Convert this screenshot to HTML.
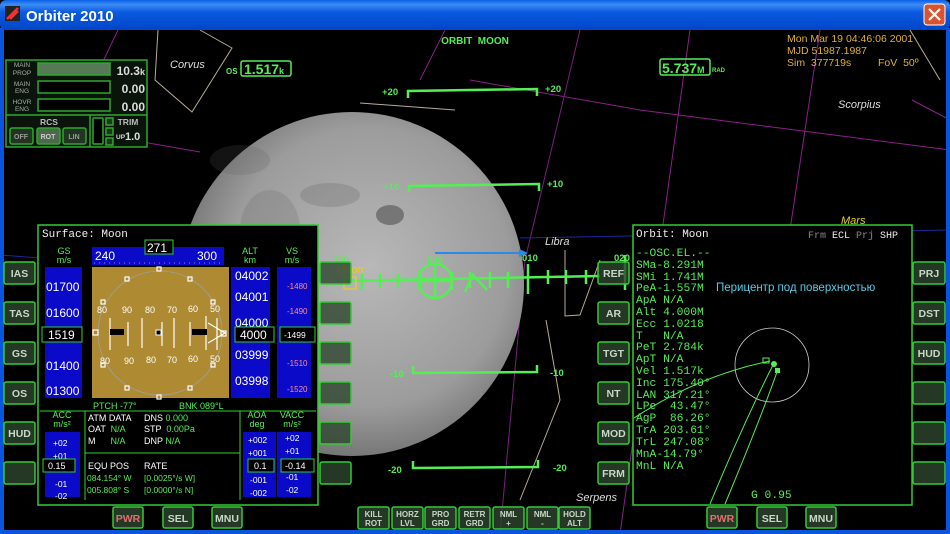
<!DOCTYPE html>
<html><head><meta charset="utf-8"><style>
html,body{margin:0;padding:0;background:#000;width:950px;height:534px;overflow:hidden}
svg{display:block}
text{white-space:pre}
.b{font-family:"Liberation Sans",sans-serif;font-weight:bold}
.m{font-family:"Liberation Mono",monospace}
.s{font-family:"Liberation Sans",sans-serif}
</style></head><body>
<svg width="950" height="534" viewBox="0 0 950 534" xmlns="http://www.w3.org/2000/svg">
<defs>
<linearGradient id="tb" x1="0" y1="0" x2="0" y2="1">
<stop offset="0" stop-color="#0a5fe8"/><stop offset="0.15" stop-color="#3d8cf5"/><stop offset="0.4" stop-color="#0a5ae0"/><stop offset="1" stop-color="#0046c8"/></linearGradient>
<radialGradient id="moon" cx="0.55" cy="0.45" r="0.58">
<stop offset="0" stop-color="#b8b8b8"/><stop offset="0.7" stop-color="#9c9c9c"/><stop offset="1" stop-color="#707070"/></radialGradient>
</defs>
<rect width="950" height="534" fill="#000"/>
<g fill="none" stroke-width="1">
<path d="M5 118 L200 152" stroke="#8a1f8a"/>
<path d="M118 30 L75 120" stroke="#8a1f8a"/>
<path d="M445 30 L420 80" stroke="#8a1f8a"/>
<path d="M470 80 L640 110 L950 150" stroke="#8a1f8a"/>
<path d="M580 30 L525 260 L500 534" stroke="#7a1f7a"/>
<path d="M690 30 L620 534" stroke="#8a1f8a"/>
<path d="M820 30 L790 230" stroke="#8a1f8a"/>
<path d="M912 100 L950 120" stroke="#8a1f8a"/>
<path d="M520 238 L950 230" stroke="#1a2a9a"/>
<path d="M0 255 L40 258" stroke="#1a2a9a"/>
<path d="M158 30 L155 80 L192 112 L232 48 L200 30" stroke="#b8aa98"/>
<path d="M360 103 L455 110" stroke="#b8aa98"/>
<path d="M565 250 L565 316 L580 315 L600 260" stroke="#b8aa98"/>
<path d="M546 320 L560 400 L520 500" stroke="#b8aa98"/>
<path d="M910 30 L940 80" stroke="#b8aa98"/>
</g>
<circle cx="352" cy="284" r="172" fill="url(#moon)"/>
<g fill="#5e5e5e">
<ellipse cx="390" cy="215" rx="14" ry="10" opacity="0.7"/>
<ellipse cx="330" cy="195" rx="30" ry="12" opacity="0.25"/>
<ellipse cx="270" cy="230" rx="30" ry="40" opacity="0.2"/>
<ellipse cx="240" cy="160" rx="30" ry="15" opacity="0.2"/>
</g>
<rect x="0" y="0" width="950" height="30" rx="6" fill="url(#tb)"/>
<rect x="0" y="28" width="4" height="506" fill="#0a55e0"/>
<rect x="946" y="28" width="4" height="506" fill="#0a55e0"/>
<rect x="0" y="530" width="950" height="4" fill="#0a55e0"/>
<rect x="5" y="6" width="15" height="15" fill="#222"/><path d="M7 19 L18 8 M10 19 L18 11" stroke="#e33" stroke-width="2.5"/>
<text x="26" y="21" class="b" font-size="15" fill="#fff">Orbiter 2010</text>
<rect x="924" y="4" width="21" height="21" rx="3" fill="#d8532f" stroke="#fff" stroke-width="1"/>
<path d="M929 9 L940 20 M940 9 L929 20" stroke="#fff" stroke-width="2.2"/>
<g class="s" font-style="italic" font-size="11" fill="#ddd">
<text x="170" y="68">Corvus</text><text x="838" y="108">Scorpius</text><text x="545" y="245">Libra</text><text x="576" y="501">Serpens</text>
<text x="841" y="224" fill="#e8d020">Mars</text><text x="336" y="273" fill="#e8d020">Moon</text>
</g>
<text x="475" y="44" class="b" font-size="10" fill="#55ee55" text-anchor="middle">ORBIT  MOON</text>
<text x="226" y="74" class="b" font-size="8" fill="#55ee55">OS</text>
<rect x="241" y="61" width="50" height="15" rx="2" fill="none" stroke="#55ee55" stroke-width="1.5"/>
<text x="244" y="74" class="b" font-size="14" fill="#55ee55">1.517<tspan font-size="9">k</tspan></text>
<rect x="660" y="59" width="50" height="16" rx="2" fill="none" stroke="#55ee55" stroke-width="1.5"/>
<text x="662" y="73" class="b" font-size="14" fill="#55ee55">5.737<tspan font-size="9">M</tspan></text>
<text x="712" y="72" class="b" font-size="6" fill="#55ee55">RAD</text>
<g class="s" font-size="10.5" fill="#e0b030">
<text x="787" y="42">Mon Mar 19 04:46:06 2001</text><text x="787" y="54">MJD 51987.1987</text><text x="787" y="66">Sim  377719s</text><text x="878" y="66">FoV  50º</text>
</g>
<g stroke="#55ee55" stroke-width="2.5" fill="none">
<path d="M408 98 V91 L537 89 V96"/><path d="M409 192 V186 L539 184 V191"/>
<path d="M413 366 V373 L537 372 V365"/><path d="M413 461 V468 L538 467 V460"/>
</g>
<g class="b" font-size="9.5" fill="#55ee55">
<text x="382" y="95">+20</text><text x="545" y="92">+20</text><text x="383" y="190">+10</text><text x="547" y="187">+10</text>
<text x="390" y="377">-10</text><text x="550" y="376">-10</text><text x="388" y="473">-20</text><text x="553" y="471">-20</text>
<text x="427" y="263">000</text><text x="522" y="261">010</text><text x="614" y="261">020</text><text x="333" y="263">350</text>
</g>
<g stroke="#55ee55" stroke-width="2.5" fill="none">
<path d="M340 281 L600 276"/>
<path d="M362 274 V290 M380 274 V288 M398 274 V288 M420 272 V290 M452 272 V290 M470 272 V288 M490 272 V288 M508 272 V288 M528 264 V294 M548 270 V284 M566 270 V284 M586 270 V284"/>
<circle cx="435" cy="281" r="17"/><path d="M435 264 V298 M418 281 H452"/>
<path d="M465 292 L473 275 L487 290"/>
<path d="M625 255 V290"/>
</g>
<rect x="344" y="277" width="12" height="12" fill="none" stroke="#e8d020" stroke-width="1.2"/>
<path d="M435 253 H520" stroke="#2a8ae8" stroke-width="2"/><path d="M519 249 L528 253 L519 257Z" fill="#2a8ae8"/>
<g stroke="#2ea82e" stroke-width="1.5" fill="#0a0a0a">
<rect x="6" y="60" width="141" height="87" fill="#0a140a"/>
<path d="M6 115 H147 M90 115 V147" fill="none"/>
<rect x="38" y="63" width="72" height="12" fill="#557a55"/>
<rect x="38" y="81" width="72" height="12" fill="#000"/>
<rect x="38" y="99" width="72" height="12" fill="#000"/>
<rect x="10" y="128" width="23" height="16" rx="2" fill="#223522"/>
<rect x="37" y="128" width="23" height="16" rx="2" fill="#4a6a4a"/>
<rect x="63" y="128" width="23" height="16" rx="2" fill="#223522"/>
<rect x="93" y="118" width="10" height="26" rx="1" fill="#000"/>
<rect x="106" y="118" width="7" height="7" fill="#223522"/><rect x="106" y="128" width="7" height="7" fill="#223522"/><rect x="106" y="138" width="7" height="7" fill="#223522"/>
</g>
<g class="s" font-size="6.5" fill="#aaa" text-anchor="middle">
<text x="22" y="67">MAIN</text><text x="22" y="75">PROP</text><text x="22" y="86">MAIN</text><text x="22" y="93">ENG</text><text x="22" y="104">HOVR</text><text x="22" y="111">ENG</text>
</g>
<g class="b" font-size="12" fill="#ddd" text-anchor="end"><text x="145" y="75">10.3<tspan font-size="9">k</tspan></text><text x="145" y="93">0.00</text><text x="145" y="111">0.00</text></g>
<text x="49" y="125" class="b" font-size="8.5" fill="#bbb" text-anchor="middle">RCS</text>
<text x="128" y="125" class="b" font-size="8.5" fill="#bbb" text-anchor="middle">TRIM</text>
<g class="b" font-size="7" fill="#999" text-anchor="middle"><text x="21" y="139">OFF</text><text x="48" y="139" fill="#ccc">ROT</text><text x="74" y="139">LIN</text></g>
<text x="116" y="139" class="b" font-size="6.5" fill="#ddd">UP</text><text x="125" y="140" class="b" font-size="11" fill="#ddd">1.0</text>
<g stroke="#33cc33" stroke-width="1.5" fill="#2e452e" fill-opacity="0.8">
<rect x="4" y="262" width="31" height="22" rx="2"/><rect x="4" y="302" width="31" height="22" rx="2"/><rect x="4" y="342" width="31" height="22" rx="2"/><rect x="4" y="382" width="31" height="22" rx="2"/><rect x="4" y="422" width="31" height="22" rx="2"/><rect x="4" y="462" width="31" height="22" rx="2"/>
<rect x="320" y="262" width="31" height="22" rx="2"/><rect x="320" y="302" width="31" height="22" rx="2"/><rect x="320" y="342" width="31" height="22" rx="2"/><rect x="320" y="382" width="31" height="22" rx="2"/><rect x="320" y="422" width="31" height="22" rx="2"/><rect x="320" y="462" width="31" height="22" rx="2"/>
<rect x="598" y="262" width="31" height="22" rx="2"/><rect x="598" y="302" width="31" height="22" rx="2"/><rect x="598" y="342" width="31" height="22" rx="2"/><rect x="598" y="382" width="31" height="22" rx="2"/><rect x="598" y="422" width="31" height="22" rx="2"/><rect x="598" y="462" width="31" height="22" rx="2"/>
<rect x="913" y="262" width="32" height="22" rx="2"/><rect x="913" y="302" width="32" height="22" rx="2"/><rect x="913" y="342" width="32" height="22" rx="2"/><rect x="913" y="382" width="32" height="22" rx="2"/><rect x="913" y="422" width="32" height="22" rx="2"/><rect x="913" y="462" width="32" height="22" rx="2"/>
<rect x="113" y="507" width="30" height="21" rx="2"/><rect x="163" y="507" width="30" height="21" rx="2"/><rect x="212" y="507" width="30" height="21" rx="2"/>
<rect x="707" y="507" width="30" height="21" rx="2"/><rect x="757" y="507" width="30" height="21" rx="2"/><rect x="806" y="507" width="30" height="21" rx="2"/>
<rect x="358" y="507" width="31" height="22" rx="2"/><rect x="392" y="507" width="31" height="22" rx="2"/><rect x="425" y="507" width="31" height="22" rx="2"/><rect x="459" y="507" width="31" height="22" rx="2"/><rect x="493" y="507" width="31" height="22" rx="2"/><rect x="527" y="507" width="31" height="22" rx="2"/><rect x="559" y="507" width="31" height="22" rx="2"/>
</g>
<g class="b" font-size="10.5" fill="#c8d8c8" text-anchor="middle">
<text x="19.5" y="277">IAS</text><text x="19.5" y="317">TAS</text><text x="19.5" y="357">GS</text><text x="19.5" y="397">OS</text><text x="19.5" y="437">HUD</text>
<text x="613.5" y="277">REF</text><text x="613.5" y="317">AR</text><text x="613.5" y="357">TGT</text><text x="613.5" y="397">NT</text><text x="613.5" y="437">MOD</text><text x="613.5" y="477">FRM</text>
<text x="929" y="277">PRJ</text><text x="929" y="317">DST</text><text x="929" y="357">HUD</text>
<text x="128" y="522" fill="#e07070">PWR</text><text x="178" y="522">SEL</text><text x="227" y="522">MNU</text>
<text x="722" y="522" fill="#e07070">PWR</text><text x="772" y="522">SEL</text><text x="821" y="522">MNU</text>
</g>
<g class="b" font-size="8" fill="#c8d8c8" text-anchor="middle">
<text x="373.5" y="517">KILL</text><text x="373.5" y="526">ROT</text><text x="407.5" y="517">HORZ</text><text x="407.5" y="526">LVL</text>
<text x="440.5" y="517">PRO</text><text x="440.5" y="526">GRD</text><text x="474.5" y="517">RETR</text><text x="474.5" y="526">GRD</text>
<text x="508.5" y="517">NML</text><text x="508.5" y="526">+</text><text x="542.5" y="517">NML</text><text x="542.5" y="526">-</text>
<text x="574.5" y="517">HOLD</text><text x="574.5" y="526">ALT</text>
</g>
<rect x="38" y="225" width="280" height="280" fill="#000" stroke="#33cc33" stroke-width="1.5"/>
<text x="42" y="237" class="m" font-size="11" fill="#eee">Surface: Moon</text>
<g fill="#0a0ac8">
<rect x="45" y="267" width="37" height="131"/><rect x="92" y="247" width="132" height="18"/>
<rect x="231" y="267" width="39" height="131"/><rect x="277" y="267" width="34" height="131"/>
<rect x="45" y="432" width="35" height="65"/><rect x="243" y="432" width="33" height="65"/><rect x="277" y="432" width="34" height="65"/>
</g>
<rect x="92" y="267" width="137" height="131" fill="#ae8a32"/>
<circle cx="160" cy="333" r="62" fill="none" stroke="#a0a0a0" stroke-width="0.8"/>
<g stroke="#fff" stroke-width="1.2" fill="none">
<path d="M110 318 V350 M128 322 V346 M142 318 V348 M162 322 V346 M174 318 V348 M190 322 V346 M206 316 V350 M217 318 V350"/>
<path d="M208 323 L225 333 L208 343"/>
<rect x="93" y="330" width="5" height="5"/><rect x="221" y="331" width="5" height="5"/>
<rect x="125" y="277" width="4" height="4"/><rect x="188" y="277" width="4" height="4"/><rect x="101" y="300" width="4" height="4"/><rect x="211" y="300" width="4" height="4"/>
<rect x="101" y="363" width="4" height="4"/><rect x="211" y="363" width="4" height="4"/><rect x="125" y="386" width="4" height="4"/><rect x="188" y="386" width="4" height="4"/>
<rect x="157" y="267" width="4" height="4"/><rect x="157" y="395" width="4" height="4"/>
</g>
<rect x="110" y="329" width="14" height="6" fill="#000"/><rect x="192" y="329" width="15" height="6" fill="#000"/><rect x="156" y="330" width="5" height="5" fill="#000" stroke="#fff"/>
<g class="s" font-size="9" fill="#fff"><text x="97" y="313">80</text><text x="122" y="313">90</text><text x="145" y="313">80</text><text x="167" y="313">70</text><text x="188" y="312">60</text><text x="210" y="312">50</text>
<text x="100" y="364">80</text><text x="124" y="364">90</text><text x="146" y="363">80</text><text x="167" y="363">70</text><text x="188" y="362">60</text><text x="210" y="362">50</text></g>
<path d="M94 263 H222" stroke="#fff" stroke-width="0.6" stroke-dasharray="1 4"/>
<g class="s" font-size="12" fill="#fff"><text x="95" y="260">240</text><text x="197" y="260">300</text></g>
<rect x="145" y="240" width="28" height="14" fill="#000" stroke="#33cc33"/><text x="147" y="252" class="s" font-size="12" fill="#fff">271</text>
<g class="s" font-size="9" fill="#55ee55" text-anchor="middle"><text x="64" y="254">GS</text><text x="64" y="263">m/s</text><text x="250" y="254">ALT</text><text x="250" y="263">km</text><text x="292" y="254">VS</text><text x="292" y="263">m/s</text>
<text x="62" y="418">ACC</text><text x="62" y="427">m/s²</text><text x="257" y="418">AOA</text><text x="257" y="427">deg</text><text x="292" y="418">VACC</text><text x="292" y="427">m/s²</text></g>
<g class="s" font-size="12" fill="#fff"><text x="46" y="291">01700</text><text x="46" y="317">01600</text><text x="46" y="370">01400</text><text x="46" y="395">01300</text>
<text x="235" y="280">04002</text><text x="235" y="301">04001</text><text x="235" y="327">04000</text><text x="235" y="359">03999</text><text x="235" y="385">03998</text></g>
<g class="s" font-size="8" fill="#ff9090"><text x="287" y="289">-1480</text><text x="287" y="314">-1490</text><text x="287" y="366">-1510</text><text x="287" y="392">-1520</text></g>
<rect x="42" y="327" width="40" height="15" fill="#000" stroke="#33cc33"/><text x="48" y="339" class="s" font-size="12" fill="#fff">1519</text>
<rect x="235" y="327" width="39" height="15" fill="#000" stroke="#33cc33"/><text x="240" y="339" class="s" font-size="12" fill="#fff">4000</text>
<rect x="280" y="327" width="35" height="15" fill="#000" stroke="#33cc33"/><text x="284" y="338" class="s" font-size="8.5" fill="#fff">-1499</text>
<g class="s" font-size="9" fill="#55ee55"><text x="93" y="409">PTCH -77°</text><text x="179" y="409">BNK 089°L</text></g>
<path d="M40 411 H316 M85 411 V500 M240 411 V500 M85 453 H240" stroke="#33cc33" stroke-width="1"/>
<g class="s" font-size="9" fill="#fff"><text x="88" y="421">ATM DATA</text><text x="144" y="421">DNS <tspan fill="#55ee55">0.000</tspan></text>
<text x="88" y="432">OAT  <tspan fill="#55ee55">N/A</tspan></text><text x="144" y="432">STP  <tspan fill="#55ee55">0.00Pa</tspan></text>
<text x="88" y="444">M      <tspan fill="#55ee55">N/A</tspan></text><text x="144" y="444">DNP <tspan fill="#55ee55">N/A</tspan></text>
<text x="88" y="469">EQU POS</text><text x="144" y="469">RATE</text></g>
<g class="s" font-size="8.5" fill="#55ee55"><text x="87" y="481">084.154° W</text><text x="144" y="481">[0.0025°/s W]</text><text x="87" y="493">005.808° S</text><text x="144" y="493">[0.0000°/s N]</text></g>
<g class="s" font-size="8.5" fill="#fff"><text x="53" y="446">+02</text><text x="53" y="459">+01</text><text x="55" y="487">-01</text><text x="55" y="499">-02</text>
<text x="248" y="443">+002</text><text x="248" y="456">+001</text><text x="250" y="483">-001</text><text x="250" y="496">-002</text>
<text x="285" y="441">+02</text><text x="285" y="454">+01</text><text x="286" y="480">-01</text><text x="286" y="493">-02</text></g>
<rect x="43" y="459" width="32" height="13" fill="#000" stroke="#33cc33"/><text x="48" y="469" class="s" font-size="9" fill="#fff">0.15</text>
<rect x="248" y="459" width="26" height="13" fill="#000" stroke="#33cc33"/><text x="254" y="469" class="s" font-size="9" fill="#fff">0.1</text>
<rect x="281" y="459" width="33" height="13" fill="#000" stroke="#33cc33"/><text x="285" y="469" class="s" font-size="9" fill="#fff">-0.14</text>
<rect x="633" y="225" width="279" height="280" fill="#000" stroke="#33cc33" stroke-width="1.5"/>
<text x="636" y="237" class="m" font-size="11" fill="#eee">Orbit: Moon</text>
<text x="808" y="238" class="m" font-size="10" fill="#888">Frm <tspan fill="#eee">ECL</tspan> Prj <tspan fill="#eee">SHP</tspan></text>
<g class="m" font-size="11.3" fill="#55ee55">
<text x="636" y="256">--OSC.EL.--</text><text x="636" y="268">SMa-8.291M</text><text x="636" y="280">SMi 1.741M</text><text x="636" y="291">PeA-1.557M</text>
<text x="636" y="303">ApA N/A</text><text x="636" y="315">Alt 4.000M</text><text x="636" y="327">Ecc 1.0218</text><text x="636" y="339">T   N/A</text>
<text x="636" y="350">PeT 2.784k</text><text x="636" y="362">ApT N/A</text><text x="636" y="374">Vel 1.517k</text><text x="636" y="386">Inc 175.40°</text>
<text x="636" y="398">LAN 317.21°</text><text x="636" y="409">LPe  43.47°</text><text x="636" y="421">AgP  86.26°</text><text x="636" y="433">TrA 203.61°</text>
<text x="636" y="445">TrL 247.08°</text><text x="636" y="457">MnA-14.79°</text><text x="636" y="469">MnL N/A</text>
<text x="751" y="498">G 0.95</text>
</g>
<text x="716" y="291" class="s" font-size="11.5" fill="#55cce8">Перицентр под поверхностью</text>
<circle cx="772" cy="365" r="37" fill="none" stroke="#ccc" stroke-width="0.8"/>
<g stroke="#55ee55" stroke-width="1" fill="none">
<path d="M634 418 Q700 375 770 361"/><path d="M710 504 Q745 420 773 365"/><path d="M725 504 Q760 420 777 372"/>
<rect x="763" y="358" width="6" height="5"/>
</g>
<circle cx="774" cy="364" r="3" fill="#55ee55"/><rect x="775" y="368" width="5" height="5" fill="#55ee55"/>
</svg>
</body></html>
